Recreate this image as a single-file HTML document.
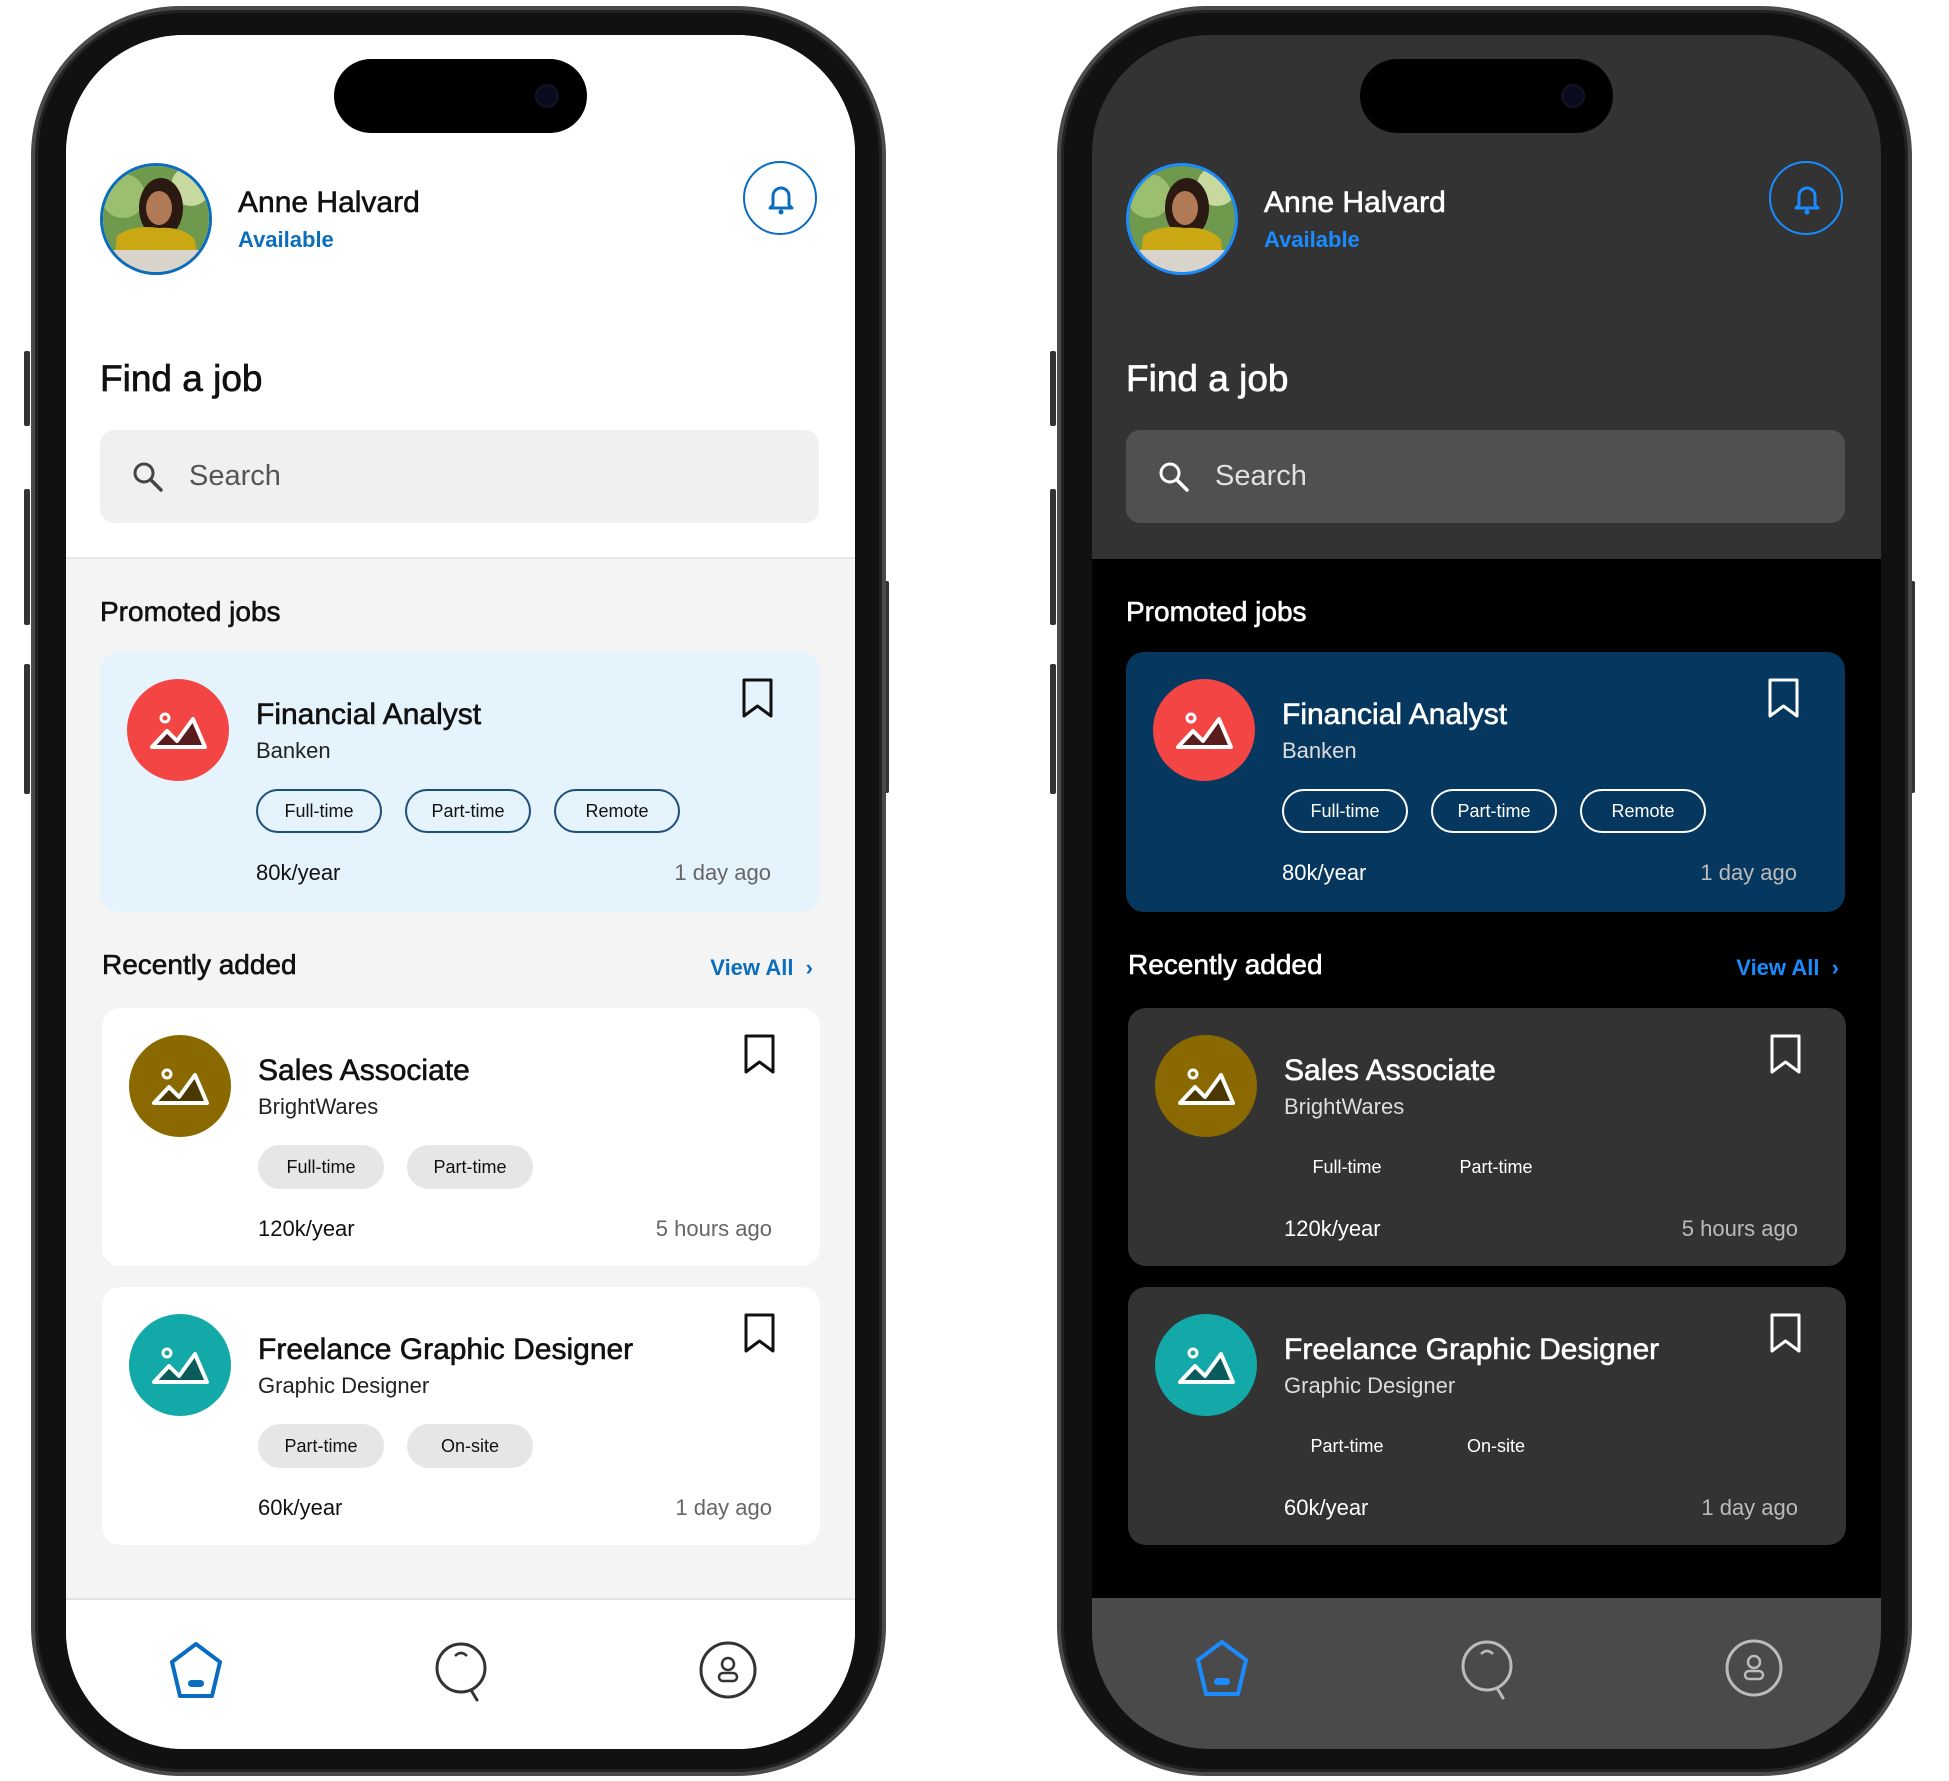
<!DOCTYPE html>
<html><head><meta charset="utf-8"><style>
*{margin:0;padding:0;box-sizing:border-box}
body{width:1949px;height:1781px;background:#fff;position:relative;overflow:hidden;font-family:"Liberation Sans",sans-serif;color:#111}
.phone{position:absolute;top:6px;width:855px;height:1770px}
.frame{position:absolute;left:0;top:0;width:855px;height:1770px;border-radius:150px;background:#111;border:4px solid #4a4a4a;box-shadow:inset 0 0 0 3px #222}
.btn{position:absolute;width:6px;background:#333;border-radius:2px}
.screen{position:absolute;left:35px;top:29px;width:789px;height:1714px;border-radius:118px;overflow:hidden;background:#f4f4f4}
.abs{position:absolute}
.header{position:absolute;left:0;top:0;width:789px;height:524px;background:#fff;border-bottom:2px solid #e6e6e6}
.island{position:absolute;left:268px;top:24px;width:253px;height:74px;border-radius:37px;background:#000}
.cam{position:absolute;left:201px;top:25px;width:24px;height:24px;border-radius:50%;background:#0b0b1e;box-shadow:inset 0 0 4px #223}
.avatar{position:absolute;left:34px;top:128px;width:112px;height:112px;border-radius:50%;border:3px solid #0a6cbf;overflow:hidden}
.name{position:absolute;left:172px;top:151px;font-size:30px;-webkit-text-stroke:.6px currentColor;white-space:nowrap}
.avail{position:absolute;left:172px;top:192px;font-size:22px;font-weight:bold;color:#0a6ebd}
.bell{position:absolute;left:677px;top:126px;width:74px;height:74px;border-radius:50%;border:2px solid #0a6cbf}
.h1{position:absolute;left:34px;top:323px;font-size:37px;-webkit-text-stroke:.7px currentColor}
.search{position:absolute;left:34px;top:395px;width:719px;height:93px;border-radius:14px;background:#f0f0f0}
.search span{position:absolute;left:89px;top:30px;font-size:29px;color:#555}
.h2{position:absolute;font-size:28px;-webkit-text-stroke:.6px currentColor;white-space:nowrap}
.viewall{position:absolute;right:42px;top:920px;font-size:22px;color:#0a6ebd;font-weight:bold}
.card{position:absolute;left:36px;width:718px;height:258px;border-radius:18px;background:#fff}
.promo{left:34px;top:617px;width:719px;height:260px;background:#e5f3fd}
.logo{position:absolute;left:27px;top:27px;width:102px;height:102px;border-radius:50%}
.title{position:absolute;left:156px;top:46px;font-size:30px;-webkit-text-stroke:.6px currentColor;white-space:nowrap}
.sub{position:absolute;left:156px;top:86px;font-size:22px;color:#222}
.chip{position:absolute;top:137px;width:126px;height:44px;border-radius:22px;font-size:18px;text-align:center;line-height:44px;background:#e6e6e6;color:#111}
.promo .chip{background:transparent;border:2px solid #1f4e79;line-height:40px}
.sal{position:absolute;left:156px;top:208px;font-size:22px}
.ago{position:absolute;right:48px;top:208px;font-size:22px;color:#666}
.bm{position:absolute;left:642px;top:26px}
.nav{position:absolute;left:0;top:1563px;width:789px;height:160px;background:#fff;border-top:2px solid #e3e3e3}
.dark .screen{background:#000}
.dark .header{background:#333;border-bottom:none}
.dark .name,.dark .h1,.dark .h2,.dark .title,.dark .sal{color:#fff}
.dark .avail,.dark .viewall{color:#1a8cff}
.dark .bell{border-color:#1a8cff}
.dark .search{background:#505050}
.dark .search span{color:#e0e0e0}
.dark .card{background:#333}
.dark .promo{background:#05375f}
.dark .sub{color:#ddd}
.dark .ago{color:#bbb}
.dark .chip{background:transparent;color:#fff}
.dark .promo .chip{border-color:#fff}
.dark .nav{background:#4a4a4a;border-top:none}
svg.abs,svg.bm{width:auto}
.bell svg{width:28px;height:32px}
.bm{width:31px;height:41px}
.search svg{width:32px;height:32px}
</style></head><body>

<div class="phone" style="left:31px">
<div class="btn" style="left:-7px;top:345px;height:75px"></div>
<div class="btn" style="left:-7px;top:483px;height:136px"></div>
<div class="btn" style="left:-7px;top:658px;height:130px"></div>
<div class="btn" style="left:852px;top:575px;height:212px"></div>
<div class="frame"></div>
<div class="screen">
 <div class="header"></div>
 <div class="island"><div class="cam"></div></div>
 <div class="avatar"><svg width="106" height="106" viewBox="0 0 106 106"><rect width="106" height="106" fill="#6f9a4e"/><circle cx="20" cy="30" r="22" fill="#9bbf6e"/><circle cx="88" cy="20" r="20" fill="#c8d9a0"/><ellipse cx="58" cy="42" rx="22" ry="30" fill="#2a1a12"/><ellipse cx="56" cy="42" rx="13" ry="17" fill="#b07a55"/><path d="M10 106 L14 70 Q30 58 56 62 Q80 60 92 74 L96 106Z" fill="#c9a814"/><rect x="0" y="84" width="106" height="22" fill="#d8d4cc"/></svg></div>
 <div class="name">Anne Halvard</div>
 <div class="avail">Available</div>
 <div class="bell"><svg class="abs" style="left:22px;top:20px" width="28" height="32" viewBox="0 0 28 32"><path d="M6 22 V13 A8 8 0 0 1 22 13 V22 L25 25 H3 Z" fill="none" stroke="#0a6cbf" stroke-width="3" stroke-linejoin="round"/><circle cx="14" cy="29" r="2.5" fill="#0a6cbf"/></svg></div>
 <div class="h1">Find a job</div>
 <div class="search"><svg class="abs" style="left:32px;top:31px" width="32" height="32" viewBox="0 0 32 32"><circle cx="12" cy="12" r="9" fill="none" stroke="#444" stroke-width="3"/><path d="M19 19 L29 29" stroke="#444" stroke-width="3.5" stroke-linecap="round"/></svg><span>Search</span></div>
 <div class="h2" style="left:34px;top:561px">Promoted jobs</div>
 <div class="card promo">
  <div class="logo" style="background:#f44545"><svg width="102" height="102" viewBox="0 0 102 102"><circle cx="38" cy="39" r="4" fill="none" stroke="#fff" stroke-width="3"/><path d="M25 68 L40 52 L50 62 L66 40 L78 68 Z" fill="#5a1c1c" stroke="#fff" stroke-width="4" stroke-linejoin="round"/></svg></div>
  <div class="title">Financial Analyst</div><div class="sub">Banken</div>
  <div class="chip" style="left:156px">Full-time</div><div class="chip" style="left:305px">Part-time</div><div class="chip" style="left:454px">Remote</div>
  <div class="sal">80k/year</div><div class="ago">1 day ago</div>
  <svg class="bm" width="31" height="41" viewBox="0 0 31 41"><path d="M2 2 H29 V38 L15.5 28 L2 38 Z" fill="none" stroke="#111" stroke-width="3" stroke-linejoin="round"/></svg>
 </div>
 <div class="h2" style="left:36px;top:914px">Recently added</div>
 <div class="viewall">View All&nbsp;&nbsp;›</div>
 <div class="card" style="top:973px">
  <div class="logo" style="background:#8a6a00"><svg width="102" height="102" viewBox="0 0 102 102"><circle cx="38" cy="39" r="4" fill="none" stroke="#fff" stroke-width="3"/><path d="M25 68 L40 52 L50 62 L66 40 L78 68 Z" fill="#4a3800" stroke="#fff" stroke-width="4" stroke-linejoin="round"/></svg></div>
  <div class="title">Sales Associate</div><div class="sub">BrightWares</div>
  <div class="chip" style="left:156px">Full-time</div><div class="chip" style="left:305px">Part-time</div>
  <div class="sal">120k/year</div><div class="ago">5 hours ago</div>
  <svg class="bm" width="31" height="41" viewBox="0 0 31 41"><path d="M2 2 H29 V38 L15.5 28 L2 38 Z" fill="none" stroke="#111" stroke-width="3" stroke-linejoin="round"/></svg>
 </div>
 <div class="card" style="top:1252px">
  <div class="logo" style="background:#13a9a9"><svg width="102" height="102" viewBox="0 0 102 102"><circle cx="38" cy="39" r="4" fill="none" stroke="#fff" stroke-width="3"/><path d="M25 68 L40 52 L50 62 L66 40 L78 68 Z" fill="#0a5c5c" stroke="#fff" stroke-width="4" stroke-linejoin="round"/></svg></div>
  <div class="title">Freelance Graphic Designer</div><div class="sub">Graphic Designer</div>
  <div class="chip" style="left:156px">Part-time</div><div class="chip" style="left:305px">On-site</div>
  <div class="sal">60k/year</div><div class="ago">1 day ago</div>
  <svg class="bm" width="31" height="41" viewBox="0 0 31 41"><path d="M2 2 H29 V38 L15.5 28 L2 38 Z" fill="none" stroke="#111" stroke-width="3" stroke-linejoin="round"/></svg>
 </div>
 <div class="nav">
  <svg class="abs" style="left:100px;top:40px" width="60" height="62" viewBox="0 0 60 62"><path d="M30 4 L54 22 L46 56 H14 L6 22 Z" fill="none" stroke="#0a6cbf" stroke-width="4" stroke-linejoin="round"/><rect x="22" y="40" width="16" height="7" rx="3.5" fill="#0a6cbf"/></svg>
  <svg class="abs" style="left:367px;top:40px" width="60" height="62" viewBox="0 0 60 62"><ellipse cx="28" cy="28" rx="24" ry="24" fill="none" stroke="#333" stroke-width="3"/><path d="M22 16 Q28 10 34 16" fill="none" stroke="#333" stroke-width="2.5"/><path d="M38 50 L44 60" stroke="#333" stroke-width="3" stroke-linecap="round"/></svg>
  <svg class="abs" style="left:632px;top:40px" width="60" height="62" viewBox="0 0 60 62"><circle cx="30" cy="30" r="27" fill="none" stroke="#333" stroke-width="3"/><circle cx="30" cy="24" r="6" fill="none" stroke="#333" stroke-width="2.5"/><rect x="21" y="33" width="18" height="8" rx="4" fill="none" stroke="#333" stroke-width="2.5"/></svg>
 </div>
</div>
</div>

<div class="phone dark" style="left:1057px">
<div class="btn" style="left:-7px;top:345px;height:75px"></div>
<div class="btn" style="left:-7px;top:483px;height:136px"></div>
<div class="btn" style="left:-7px;top:658px;height:130px"></div>
<div class="btn" style="left:852px;top:575px;height:212px"></div>
<div class="frame"></div>
<div class="screen">
 <div class="header"></div>
 <div class="island"><div class="cam"></div></div>
 <div class="avatar" style="border-color:#1a8cff"><svg width="106" height="106" viewBox="0 0 106 106"><rect width="106" height="106" fill="#6f9a4e"/><circle cx="20" cy="30" r="22" fill="#9bbf6e"/><circle cx="88" cy="20" r="20" fill="#c8d9a0"/><ellipse cx="58" cy="42" rx="22" ry="30" fill="#2a1a12"/><ellipse cx="56" cy="42" rx="13" ry="17" fill="#b07a55"/><path d="M10 106 L14 70 Q30 58 56 62 Q80 60 92 74 L96 106Z" fill="#c9a814"/><rect x="0" y="84" width="106" height="22" fill="#d8d4cc"/></svg></div>
 <div class="name">Anne Halvard</div>
 <div class="avail">Available</div>
 <div class="bell"><svg class="abs" style="left:22px;top:20px" width="28" height="32" viewBox="0 0 28 32"><path d="M6 22 V13 A8 8 0 0 1 22 13 V22 L25 25 H3 Z" fill="none" stroke="#1a8cff" stroke-width="3" stroke-linejoin="round"/><circle cx="14" cy="29" r="2.5" fill="#1a8cff"/></svg></div>
 <div class="h1">Find a job</div>
 <div class="search"><svg class="abs" style="left:32px;top:31px" width="32" height="32" viewBox="0 0 32 32"><circle cx="12" cy="12" r="9" fill="none" stroke="#fff" stroke-width="3"/><path d="M19 19 L29 29" stroke="#fff" stroke-width="3.5" stroke-linecap="round"/></svg><span>Search</span></div>
 <div class="h2" style="left:34px;top:561px">Promoted jobs</div>
 <div class="card promo">
  <div class="logo" style="background:#f44545"><svg width="102" height="102" viewBox="0 0 102 102"><circle cx="38" cy="39" r="4" fill="none" stroke="#fff" stroke-width="3"/><path d="M25 68 L40 52 L50 62 L66 40 L78 68 Z" fill="#5a1c1c" stroke="#fff" stroke-width="4" stroke-linejoin="round"/></svg></div>
  <div class="title">Financial Analyst</div><div class="sub">Banken</div>
  <div class="chip" style="left:156px">Full-time</div><div class="chip" style="left:305px">Part-time</div><div class="chip" style="left:454px">Remote</div>
  <div class="sal">80k/year</div><div class="ago">1 day ago</div>
  <svg class="bm" width="31" height="41" viewBox="0 0 31 41"><path d="M2 2 H29 V38 L15.5 28 L2 38 Z" fill="none" stroke="#fff" stroke-width="3" stroke-linejoin="round"/></svg>
 </div>
 <div class="h2" style="left:36px;top:914px">Recently added</div>
 <div class="viewall">View All&nbsp;&nbsp;›</div>
 <div class="card" style="top:973px">
  <div class="logo" style="background:#8a6a00"><svg width="102" height="102" viewBox="0 0 102 102"><circle cx="38" cy="39" r="4" fill="none" stroke="#fff" stroke-width="3"/><path d="M25 68 L40 52 L50 62 L66 40 L78 68 Z" fill="#4a3800" stroke="#fff" stroke-width="4" stroke-linejoin="round"/></svg></div>
  <div class="title">Sales Associate</div><div class="sub">BrightWares</div>
  <div class="chip" style="left:156px">Full-time</div><div class="chip" style="left:305px">Part-time</div>
  <div class="sal">120k/year</div><div class="ago">5 hours ago</div>
  <svg class="bm" width="31" height="41" viewBox="0 0 31 41"><path d="M2 2 H29 V38 L15.5 28 L2 38 Z" fill="none" stroke="#fff" stroke-width="3" stroke-linejoin="round"/></svg>
 </div>
 <div class="card" style="top:1252px">
  <div class="logo" style="background:#13a9a9"><svg width="102" height="102" viewBox="0 0 102 102"><circle cx="38" cy="39" r="4" fill="none" stroke="#fff" stroke-width="3"/><path d="M25 68 L40 52 L50 62 L66 40 L78 68 Z" fill="#0a5c5c" stroke="#fff" stroke-width="4" stroke-linejoin="round"/></svg></div>
  <div class="title">Freelance Graphic Designer</div><div class="sub">Graphic Designer</div>
  <div class="chip" style="left:156px">Part-time</div><div class="chip" style="left:305px">On-site</div>
  <div class="sal">60k/year</div><div class="ago">1 day ago</div>
  <svg class="bm" width="31" height="41" viewBox="0 0 31 41"><path d="M2 2 H29 V38 L15.5 28 L2 38 Z" fill="none" stroke="#fff" stroke-width="3" stroke-linejoin="round"/></svg>
 </div>
 <div class="nav">
  <svg class="abs" style="left:100px;top:40px" width="60" height="62" viewBox="0 0 60 62"><path d="M30 4 L54 22 L46 56 H14 L6 22 Z" fill="none" stroke="#1a8cff" stroke-width="4" stroke-linejoin="round"/><rect x="22" y="40" width="16" height="7" rx="3.5" fill="#1a8cff"/></svg>
  <svg class="abs" style="left:367px;top:40px" width="60" height="62" viewBox="0 0 60 62"><ellipse cx="28" cy="28" rx="24" ry="24" fill="none" stroke="#bbb" stroke-width="3"/><path d="M22 16 Q28 10 34 16" fill="none" stroke="#bbb" stroke-width="2.5"/><path d="M38 50 L44 60" stroke="#bbb" stroke-width="3" stroke-linecap="round"/></svg>
  <svg class="abs" style="left:632px;top:40px" width="60" height="62" viewBox="0 0 60 62"><circle cx="30" cy="30" r="27" fill="none" stroke="#bbb" stroke-width="3"/><circle cx="30" cy="24" r="6" fill="none" stroke="#bbb" stroke-width="2.5"/><rect x="21" y="33" width="18" height="8" rx="4" fill="none" stroke="#bbb" stroke-width="2.5"/></svg>
 </div>
</div>
</div>
</body></html>
